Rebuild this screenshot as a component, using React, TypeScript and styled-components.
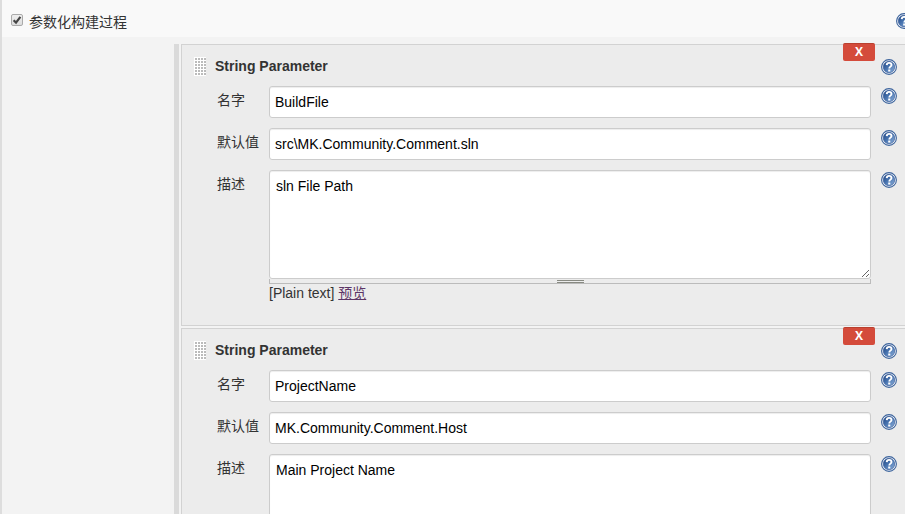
import React, { useId, useState } from "react";
import styled, { createGlobalStyle } from "styled-components";

const GlobalStyle = createGlobalStyle`
  *, *::before, *::after { box-sizing: border-box; }
  html { scrollbar-width: none; }
  body {
    margin: 0;
    background: #f3f3f3;
    color: #333;
    font: 14px/20px "Liberation Sans", "Noto Sans CJK SC", sans-serif;
  }
`;

const Page = styled.main`
  display: flex;
  flex-direction: column;
  min-height: 100vh;
  overflow-x: clip;
  border-left: 2px solid #ddd;
`;

const OptionBar = styled.header`
  display: flex;
  flex: none;
  align-items: center;
  justify-content: space-between;
  height: 37px;
  padding: 5px 0 0 9px;
  background: #f9f9f9;
`;

const OptionLabel = styled.label`
  display: flex;
  align-items: center;
  gap: 6px;
  padding-top: 2px;
`;

const TickBox = styled.span`
  position: relative;
  width: 12px;
  height: 12px;
  margin-bottom: 4px;

  svg {
    position: absolute;
    inset: 0;
    pointer-events: none;
  }
`;

const Tick = styled.input`
  display: block;
  appearance: none;
  width: 12px;
  height: 12px;
  margin: 0;
  border: 1px solid #aaa;
  border-radius: 2px;
  background: linear-gradient(#eee, #ddd);

  &:not(:checked) + svg { display: none; }
`;

const Body = styled.div`
  display: flex;
  flex: 1;
  padding-top: 7px;
`;

const Indent = styled.div`
  flex: none;
  width: 172px;
`;

const Parameters = styled.div`
  display: flex;
  flex: 1;
  flex-direction: column;
  gap: 2px;
  min-width: 0;
  padding-left: 2px;
  border-left: 5px solid #dadada;
`;

const Panel = styled.section`
  position: relative;
  flex: none;
  padding: 12px 8px 23px 12px;
  border: 1px solid #d2d2d2;
  border-right: 0;
  background: #ececec;
`;

const PanelHead = styled.div`
  display: flex;
  align-items: center;
  height: 19px;
  margin-bottom: 10px;
`;

const Grip = styled.span`
  flex: none;
  width: 12px;
  height: 19px;
  margin-right: 9px;
  background: conic-gradient(from 90deg at 1px 2px, #fff 270deg, #bbb 0) 0 1px / 3px 3px #fff;
  cursor: move;
`;

const Title = styled.h2`
  flex: 1;
  margin: 0;
  padding-bottom: 2px;
  font-size: 14px;
  line-height: 20px;
`;

const RemoveButton = styled.button`
  position: absolute;
  top: -2px;
  right: 30px;
  width: 32px;
  height: 18px;
  padding: 0 0 1px;
  border: 0;
  border-radius: 2px;
  border-top: 1px solid #b9402f;
  background: #d44b3b;
  color: #fff;
  font: bold 12px/16px "Open Sans", sans-serif;
`;

const Row = styled.div`
  display: grid;
  grid-template-columns: 52px minmax(0, 1fr) 16px;
  align-items: start;
  margin-bottom: 10px;
  padding-left: 23px;

  & > label { padding-top: 4px; }
  & > button { margin-top: 2px; }
  &:last-child { margin-bottom: 0; }
`;

const Field = styled.div`
  margin-right: 10px;
`;

const TextInput = styled.input`
  display: block;
  width: 100%;
  height: 32px;
  padding: 0 5px;
  border: 1px solid #ccc;
  border-radius: 3px;
  background: #fff;
  box-shadow: inset 0 1px 1px rgba(0, 0, 0, 0.075);
  color: #000;
  font: inherit;
`;

const TextArea = styled.textarea`
  display: block;
  width: 100%;
  height: 109px;
  padding: 5px 6px;
  border: 1px solid #ccc;
  border-radius: 3px;
  background: #fff;
  box-shadow: inset 0 1px 1px rgba(0, 0, 0, 0.075);
  color: #000;
  font: inherit;
  resize: vertical;
`;

const ResizeBar = styled.div`
  display: flex;
  align-items: center;
  justify-content: center;
  height: 5px;
  border: 1px solid #bbb;
  border-top: 0;
  cursor: ns-resize;

  &::before {
    content: "";
    width: 27px;
    height: 3px;
    border: solid #888a82;
    border-width: 1px 0;
  }
`;

const Markup = styled.div`
  line-height: 18px;
`;

const PreviewLink = styled.a`
  color: #5c3566;
  text-decoration: underline;
`;

const HelpButton = styled.button<{ $overhang?: boolean }>`
  display: block;
  flex: none;
  width: 16px;
  height: 16px;
  margin: 0;
  margin-right: ${(p) => (p.$overhang ? "-7px" : "0")};
  padding: 0;
  border: 0;
  background: none;
`;

function Help({ about, overhang }: { about: string; overhang?: boolean }) {
  const id = useId();
  return (
    <HelpButton type="button" aria-label={`Help: ${about}`} $overhang={overhang}>
      <svg width="16" height="16" viewBox="0 0 16 16" display="block">
        <defs>
          <linearGradient id={id} x1="0" y1="0" x2="1" y2="1">
            <stop offset="0" stopColor="#1f447f" />
            <stop offset="0.45" stopColor="#4672ae" />
            <stop offset="1" stopColor="#8fb2dc" />
          </linearGradient>
        </defs>
        <circle cx="8" cy="8" r="7.4" fill="#f2f5fa" stroke="#3d649c" strokeWidth="1.1" />
        <circle cx="8" cy="8" r="5.7" fill={`url(#${id})`} stroke="#2b5190" strokeWidth="0.6" />
        <path
          d="M5.7 6.1C5.8 4.6 6.8 3.9 8.1 3.9c1.5 0 2.4.8 2.4 2 0 1.7-2.2 1.8-2.2 3.6"
          fill="none"
          stroke="#fff"
          strokeWidth="1.9"
        />
        <rect x="7.2" y="10.5" width="2.1" height="2" fill="#fff" />
      </svg>
    </HelpButton>
  );
}

interface Parameter {
  name: string;
  value: string;
  description: string;
}

const parameters: Parameter[] = [
  { name: "BuildFile", value: "src\\MK.Community.Comment.sln", description: "sln File Path" },
  { name: "ProjectName", value: "MK.Community.Comment.Host", description: "Main Project Name" },
];

function ParameterPanel({ parameter }: { parameter: Parameter }) {
  const id = useId();
  return (
    <Panel>
      <RemoveButton type="button">X</RemoveButton>
      <PanelHead>
        <Grip />
        <Title>String Parameter</Title>
        <Help about="String Parameter" />
      </PanelHead>
      <Row>
        <label htmlFor={`${id}-name`}>名字</label>
        <Field>
          <TextInput id={`${id}-name`} defaultValue={parameter.name} />
        </Field>
        <Help about="名字" />
      </Row>
      <Row>
        <label htmlFor={`${id}-value`}>默认值</label>
        <Field>
          <TextInput id={`${id}-value`} defaultValue={parameter.value} />
        </Field>
        <Help about="默认值" />
      </Row>
      <Row>
        <label htmlFor={`${id}-description`}>描述</label>
        <Field>
          <TextArea id={`${id}-description`} defaultValue={parameter.description} />
          <ResizeBar />
          <Markup>
            [Plain text] <PreviewLink href="#preview">预览</PreviewLink>
          </Markup>
        </Field>
        <Help about="描述" />
      </Row>
    </Panel>
  );
}

export default function App() {
  const [enabled, setEnabled] = useState(true);
  return (
    <>
      <GlobalStyle />
      <Page>
        <OptionBar>
          <OptionLabel>
            <TickBox>
              <Tick
                type="checkbox"
                checked={enabled}
                onChange={(event) => setEnabled(event.target.checked)}
              />
              <svg width="12" height="12" viewBox="0 0 12 12">
                <path d="M2.6 6.2 5 8.6 9.4 2.8" fill="none" stroke="#444" strokeWidth="2.2" />
              </svg>
            </TickBox>
            参数化构建过程
          </OptionLabel>
          <Help about="参数化构建过程" overhang />
        </OptionBar>
        <Body>
          <Indent />
          <Parameters>
            {parameters.map((parameter) => (
              <ParameterPanel key={parameter.name} parameter={parameter} />
            ))}
          </Parameters>
        </Body>
      </Page>
    </>
  );
}
